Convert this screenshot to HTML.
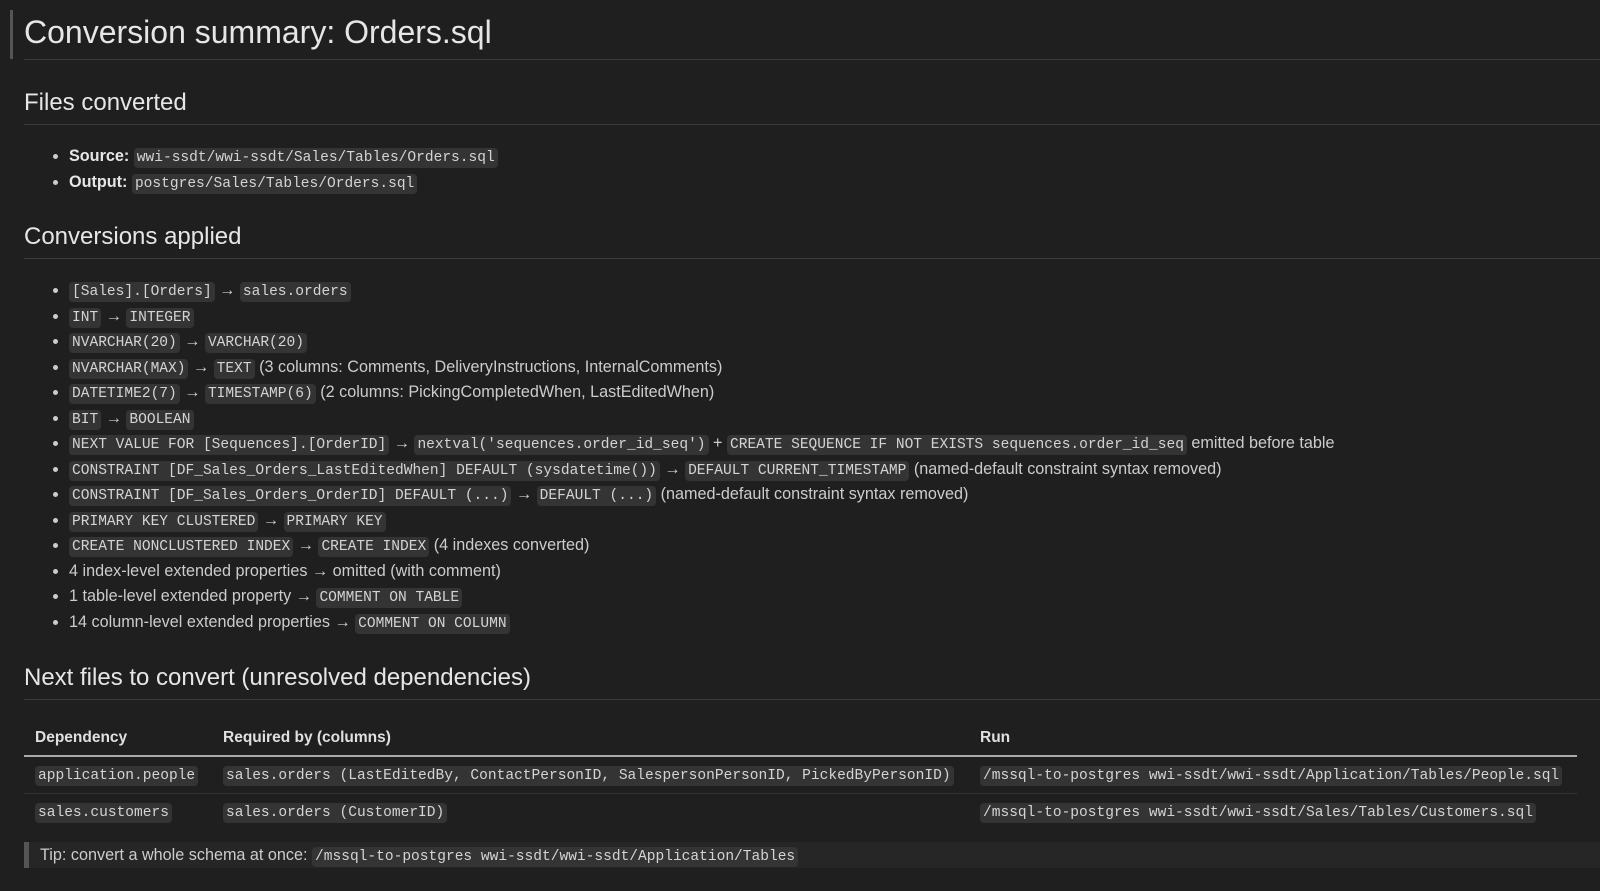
<!DOCTYPE html>
<html><head><meta charset="utf-8"><style>
*{margin:0;padding:0;box-sizing:border-box}
body{width:1600px;height:891px;background:#1f1f1f;color:#cccccc;font-family:"Liberation Sans",sans-serif;font-size:16.2px;overflow:hidden;position:relative}
code{font-family:"Liberation Mono",monospace;font-size:14.55px;background:#343434;color:#d4d4d4;border-radius:4px;padding:2px 3px}
.abs{position:absolute}
.bar{left:10px;top:10px;width:3px;height:49px;background:#555}
h1{position:absolute;left:24px;top:11px;font-size:32px;font-weight:normal;color:#e6e6e6;line-height:42px}
h2{position:absolute;left:24px;font-size:24px;font-weight:normal;color:#e6e6e6;line-height:30px}
.rule{position:absolute;left:24px;right:0;height:1px;background:#3c3c3c}
ul{position:absolute;left:69px;list-style:none}
li{height:25.5px;line-height:25.5px;position:relative;white-space:nowrap}
li:before{content:"";position:absolute;left:-16px;top:10px;width:5px;height:5px;border-radius:50%;background:#ccc}
b{color:#e6e6e6}
table{position:absolute;left:24px;top:720px;width:1553px;border-collapse:collapse}
th{text-align:left;font-weight:bold;color:#e0e0e0;height:36px;padding-left:11px;border-bottom:2px solid #aaa;font-size:15.5px}
td{height:37px;padding-left:11px;border-bottom:1px solid #333;white-space:nowrap}
tr:last-child td{border-bottom:none}
.tip{position:absolute;left:24px;top:842px;width:1576px;height:26px;background:#262626;border-left:5px solid #555;padding-left:11px;line-height:26px}
</style></head><body>
<div class="abs bar"></div>
<h1>Conversion summary: Orders.sql</h1>
<div class="rule" style="top:59px"></div>
<h2 style="top:88px">Files converted</h2>
<div class="rule" style="top:124px"></div>
<ul style="top:144px">
<li><b>Source:</b> <code>wwi-ssdt/wwi-ssdt/Sales/Tables/Orders.sql</code></li>
<li><b>Output:</b> <code>postgres/Sales/Tables/Orders.sql</code></li>
</ul>
<h2 style="top:222px">Conversions applied</h2>
<div class="rule" style="top:258px"></div>
<ul style="top:278px">
<li><code>[Sales].[Orders]</code> → <code>sales.orders</code></li>
<li><code>INT</code> → <code>INTEGER</code></li>
<li><code>NVARCHAR(20)</code> → <code>VARCHAR(20)</code></li>
<li><code>NVARCHAR(MAX)</code> → <code>TEXT</code> (3 columns: Comments, DeliveryInstructions, InternalComments)</li>
<li><code>DATETIME2(7)</code> → <code>TIMESTAMP(6)</code> (2 columns: PickingCompletedWhen, LastEditedWhen)</li>
<li><code>BIT</code> → <code>BOOLEAN</code></li>
<li><code>NEXT VALUE FOR [Sequences].[OrderID]</code> → <code>nextval('sequences.order_id_seq')</code> + <code>CREATE SEQUENCE IF NOT EXISTS sequences.order_id_seq</code> emitted before table</li>
<li><code>CONSTRAINT [DF_Sales_Orders_LastEditedWhen] DEFAULT (sysdatetime())</code> → <code>DEFAULT CURRENT_TIMESTAMP</code> (named-default constraint syntax removed)</li>
<li><code>CONSTRAINT [DF_Sales_Orders_OrderID] DEFAULT (...)</code> → <code>DEFAULT (...)</code> (named-default constraint syntax removed)</li>
<li><code>PRIMARY KEY CLUSTERED</code> → <code>PRIMARY KEY</code></li>
<li><code>CREATE NONCLUSTERED INDEX</code> → <code>CREATE INDEX</code> (4 indexes converted)</li>
<li>4 index-level extended properties → omitted (with comment)</li>
<li>1 table-level extended property → <code>COMMENT ON TABLE</code></li>
<li>14 column-level extended properties → <code>COMMENT ON COLUMN</code></li>
</ul>
<h2 style="top:663px">Next files to convert (unresolved dependencies)</h2>
<div class="rule" style="top:699px"></div>
<table>
<tr><th style="width:188px">Dependency</th><th style="width:757px">Required by (columns)</th><th>Run</th></tr>
<tr><td><code>application.people</code></td><td><code>sales.orders (LastEditedBy, ContactPersonID, SalespersonPersonID, PickedByPersonID)</code></td><td><code>/mssql-to-postgres wwi-ssdt/wwi-ssdt/Application/Tables/People.sql</code></td></tr>
<tr><td><code>sales.customers</code></td><td><code>sales.orders (CustomerID)</code></td><td><code>/mssql-to-postgres wwi-ssdt/wwi-ssdt/Sales/Tables/Customers.sql</code></td></tr>
</table>
<div class="tip">Tip: convert a whole schema at once: <code>/mssql-to-postgres wwi-ssdt/wwi-ssdt/Application/Tables</code></div>
</body></html>
